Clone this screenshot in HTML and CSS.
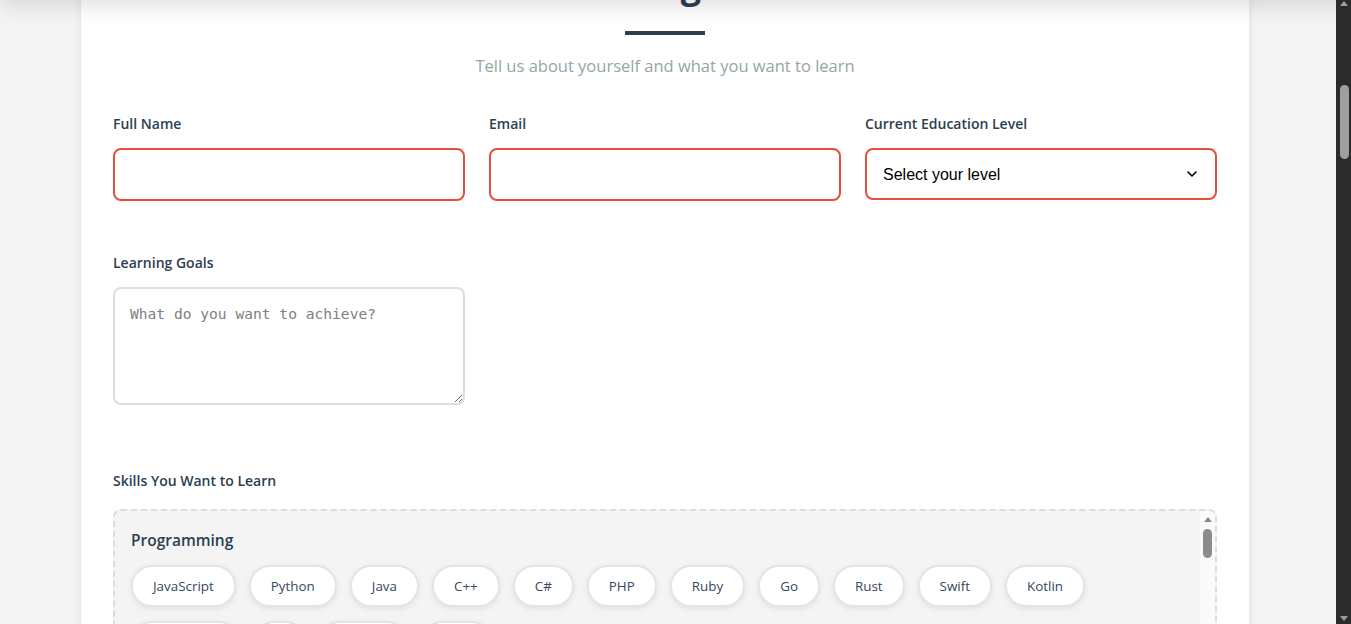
FILE: index.html
```html
<!DOCTYPE html>
<html lang="en">
<head>
<meta charset="utf-8">
<title>Student Registration</title>
<link rel="stylesheet" href="styles.css">
</head>
<body>
<header class="site-header">
  <div class="brand">LearnPath</div>
  <nav class="nav">
    <a class="nav-link" href="#">Courses</a>
    <a class="nav-link" href="#">Mentors</a>
    <a class="nav-link" href="#">Register</a>
  </nav>
</header>

<div class="page-scrollbar" aria-hidden="true">
  <span class="arrow-up dark-arrow"></span>
  <span class="page-thumb"></span>
  <span class="arrow-down dark-arrow"></span>
</div>

<main class="page">
  <section class="hero">
    <h2 class="hero-title">Start Your Learning Journey</h2>
    <p class="hero-text">Join thousands of learners building new skills every day.</p>
  </section>

  <div class="card">
    <div class="form-header">
      <h1 class="form-title">Student Registration</h1>
      <div class="title-bar"></div>
      <p class="subtitle">Tell us about yourself and what you want to learn</p>
    </div>

    <form class="form">
      <div class="form-grid">
        <div class="form-group">
          <label class="label" for="name">Full Name</label>
          <input class="field field-error" id="name" type="text">
        </div>
        <div class="form-group">
          <label class="label" for="email">Email</label>
          <input class="field field-error" id="email" type="email">
        </div>
        <div class="form-group">
          <label class="label" for="level">Current Education Level</label>
          <div class="select-wrap">
            <select class="field field-error select" id="level">
              <option>Select your level</option>
              <option>High School</option>
              <option>Bachelor's Degree</option>
              <option>Master's Degree</option>
              <option>PhD</option>
            </select>
            <svg class="chevron" width="10" height="6" viewBox="0 0 10 6"><path d="M1 1l4 4 4-4" fill="none" stroke="#000" stroke-width="1.6" stroke-linecap="round" stroke-linejoin="round"/></svg>
          </div>
        </div>
      </div>

      <div class="form-grid goals-row">
        <div class="form-group">
          <label class="label" for="goals">Learning Goals</label>
          <textarea class="field textarea" id="goals" placeholder="What do you want to achieve?"></textarea>
        </div>
      </div>

      <div class="skills-section">
        <label class="label skills-label">Skills You Want to Learn</label>
        <div class="skills-box">
          <div class="skills-scroll">
            <div class="skill-category">
              <h4 class="category-title">Programming</h4>
              <div class="chips">
                <span class="chip">JavaScript</span>
                <span class="chip">Python</span>
                <span class="chip">Java</span>
                <span class="chip">C++</span>
                <span class="chip">C#</span>
                <span class="chip">PHP</span>
                <span class="chip">Ruby</span>
                <span class="chip">Go</span>
                <span class="chip">Rust</span>
                <span class="chip">Swift</span>
                <span class="chip">Kotlin</span>
                <span class="chip">TypeScript</span>
                <span class="chip">R</span>
                <span class="chip">Haskell</span>
                <span class="chip">Dart</span>
              </div>
            </div>
            <div class="skill-category">
              <h4 class="category-title">Web Development</h4>
              <div class="chips">
                <span class="chip">HTML</span>
                <span class="chip">CSS</span>
                <span class="chip">React</span>
                <span class="chip">Vue</span>
                <span class="chip">Angular</span>
                <span class="chip">Svelte</span>
                <span class="chip">Node.js</span>
                <span class="chip">Django</span>
                <span class="chip">Flask</span>
                <span class="chip">Laravel</span>
                <span class="chip">Next.js</span>
                <span class="chip">Tailwind</span>
              </div>
            </div>
            <div class="skill-category">
              <h4 class="category-title">Data Science</h4>
              <div class="chips">
                <span class="chip">Machine Learning</span>
                <span class="chip">Deep Learning</span>
                <span class="chip">Statistics</span>
                <span class="chip">Pandas</span>
                <span class="chip">NumPy</span>
                <span class="chip">TensorFlow</span>
                <span class="chip">PyTorch</span>
                <span class="chip">SQL</span>
              </div>
            </div>
            <div class="skill-category">
              <h4 class="category-title">Design</h4>
              <div class="chips">
                <span class="chip">UI Design</span>
                <span class="chip">UX Research</span>
                <span class="chip">Figma</span>
                <span class="chip">Photoshop</span>
                <span class="chip">Illustrator</span>
                <span class="chip">Typography</span>
              </div>
            </div>
          </div>
          <div class="box-scrollbar" aria-hidden="true">
            <span class="arrow-up light-arrow"></span>
            <span class="box-thumb"></span>
          </div>
        </div>
      </div>

      <div class="extra-section">
        <label class="label">Preferred Learning Style</label>
        <div class="options">
          <span class="option">Video Lessons</span>
          <span class="option">Reading</span>
          <span class="option">Hands-on Projects</span>
          <span class="option">Live Mentoring</span>
        </div>
      </div>

      <div class="extra-section">
        <label class="label">Weekly Availability</label>
        <div class="options">
          <span class="option">1-3 hours</span>
          <span class="option">4-6 hours</span>
          <span class="option">7-10 hours</span>
          <span class="option">10+ hours</span>
        </div>
      </div>

      <div class="extra-section">
        <button class="submit" type="button">Create My Learning Plan</button>
      </div>
    </form>
  </div>

  <footer class="footer">© 2024 LearnPath. All rights reserved.</footer>
</main>
<script src="script.js"></script>
</body>
</html>
```

FILE: styles.css
```css
html {
  background: #f4f4f4;
}

body {
  margin: 0;
  background: #f4f4f4;
  font-family: "Open Sans", "Noto Sans", sans-serif;
  color: #2c3e50;
}

.site-header {
  position: fixed;
  top: 0;
  left: 0;
  right: 0;
  height: 64px;
  padding: 0 40px;
  display: flex;
  align-items: center;
  justify-content: space-between;
  background: #ffffff;
  box-shadow: 0 4px 24px rgba(0, 0, 0, 0.14);
  transform: translateY(-100%);
  z-index: 10;
}

.brand {
  font-weight: 700;
  font-size: 20px;
}

.nav {
  display: flex;
  gap: 24px;
}

.nav-link {
  color: #2c3e50;
  text-decoration: none;
}

/* viewport scrollbar (dark) */
.page-scrollbar {
  position: fixed;
  top: 0;
  right: 0;
  bottom: 0;
  width: 15px;
  display: flex;
  flex-direction: column;
  align-items: center;
  background: #2b2b2b;
  z-index: 20;
}

.arrow-up,
.arrow-down {
  width: 0;
  height: 0;
  border-left: 4.5px solid transparent;
  border-right: 4.5px solid transparent;
}

.dark-arrow.arrow-up {
  margin-top: 1px;
  border-bottom: 5px solid #9e9e9e;
}

.dark-arrow.arrow-down {
  margin-top: auto;
  margin-bottom: 3px;
  border-top: 5px solid #9e9e9e;
}

.page-thumb {
  width: 9px;
  height: 74px;
  margin-top: 79px;
  margin-left: 1px;
  border-radius: 5px;
  background: #9f9f9f;
}

.page {
  box-sizing: border-box;
  min-height: 5009px;
  padding: 70px 102px 60px 81px;
}

.hero {
  height: 383px;
  margin-bottom: 60px;
  display: flex;
  flex-direction: column;
  align-items: center;
  justify-content: center;
  text-align: center;
}

.hero-title {
  margin: 0 0 12px;
  font-size: 40px;
}

.hero-text {
  margin: 0;
  color: #7f8c8d;
}

.card {
  background: #ffffff;
  border-radius: 12px;
  box-shadow: 0 0 10px rgba(0, 0, 0, 0.08);
  padding: 40px 32px 48px;
}

.form-header {
  text-align: center;
  margin-bottom: 36px;
}

.form-title {
  margin: 0 0 24px;
  font-size: 36px;
  line-height: 44px;
  font-weight: 700;
  word-spacing: 10px;
  color: #2c3e50;
}

.title-bar {
  width: 80px;
  height: 4px;
  margin: 0 auto 19px;
  background: #2c3e50;
}

.subtitle {
  margin: 0;
  font-size: 16.5px;
  line-height: 24px;
  color: #95a5a6;
}

.form-grid {
  display: grid;
  grid-template-columns: repeat(3, 1fr);
  column-gap: 24px;
}

.goals-row {
  margin-top: 52px;
}

.label {
  display: block;
  margin-bottom: 14px;
  font-size: 14px;
  line-height: 20px;
  font-weight: 600;
  color: #2c3e50;
}

.field {
  display: block;
  width: 100%;
  box-sizing: border-box;
  height: 53px;
  padding: 0 15px;
  border: 2px solid #dddddd;
  border-radius: 8px;
  background: #ffffff;
  font-family: "Liberation Sans", Arial, sans-serif;
  font-size: 16px;
  color: #000000;
  outline: none;
}

.field-error {
  border-color: #e74c3c;
}

.select-wrap {
  position: relative;
}

.select {
  appearance: none;
  -webkit-appearance: none;
  height: 52px;
  padding: 0 40px 0 16px;
}

.chevron {
  position: absolute;
  right: 20px;
  top: 23px;
  pointer-events: none;
}

.textarea {
  height: 118px;
  padding: 15px;
  font-family: "DejaVu Sans Mono", monospace;
  font-size: 14.6px;
  line-height: 1.4;
}

.textarea::placeholder {
  color: #808080;
}

.skills-section {
  margin-top: 66px;
}

.skills-label {
  margin-bottom: 18px;
}

.skills-box {
  display: flex;
  height: 420px;
  border: 2px dashed #dddddd;
  border-radius: 8px;
  background: #f4f4f4;
  overflow: hidden;
}

.skills-scroll {
  flex: 1;
  min-width: 0;
  padding: 16px;
  overflow: hidden;
}

.box-scrollbar {
  width: 15px;
  flex: none;
  display: flex;
  flex-direction: column;
  align-items: center;
  background: #fafafa;
}

.light-arrow.arrow-up {
  margin-top: 6px;
  border-bottom: 5px solid #8a8a8a;
}

.box-thumb {
  width: 8.5px;
  height: 29px;
  margin-top: 7px;
  border-radius: 5px;
  background: #8c8c8c;
}

.skill-category + .skill-category {
  margin-top: 22px;
}

.category-title {
  margin: 0 0 12px;
  font-size: 15.5px;
  line-height: 26px;
  font-weight: 600;
  color: #2c3e50;
}

.chips {
  display: flex;
  flex-wrap: wrap;
  gap: 14px 13px;
}

.chip {
  box-sizing: border-box;
  height: 42px;
  padding: 0 20px;
  display: inline-flex;
  align-items: center;
  border: 2px solid #e4e4e4;
  border-radius: 21px;
  background: #ffffff;
  box-shadow: 0 2px 6px rgba(0, 0, 0, 0.08);
  font-size: 13.4px;
  color: #34495e;
}

.extra-section {
  margin-top: 40px;
}

.options {
  display: flex;
  gap: 14px;
}

.option {
  padding: 12px 20px;
  border: 2px solid #dddddd;
  border-radius: 8px;
  font-size: 14px;
}

.submit {
  padding: 14px 32px;
  border: none;
  border-radius: 8px;
  background: #2c3e50;
  color: #ffffff;
  font-family: inherit;
  font-size: 16px;
}

.footer {
  padding: 40px 0;
  text-align: center;
  font-size: 14px;
  color: #95a5a6;
}
```

FILE: script.js
```js
(function () {
  var bar = document.querySelector('.title-bar');
  function align() {
    var y = bar.getBoundingClientRect().top + window.scrollY - 31;
    window.scrollTo(0, y);
  }
  align();
  if (document.fonts && document.fonts.ready) {
    document.fonts.ready.then(align);
  }
  window.addEventListener('load', align);
})();
```
